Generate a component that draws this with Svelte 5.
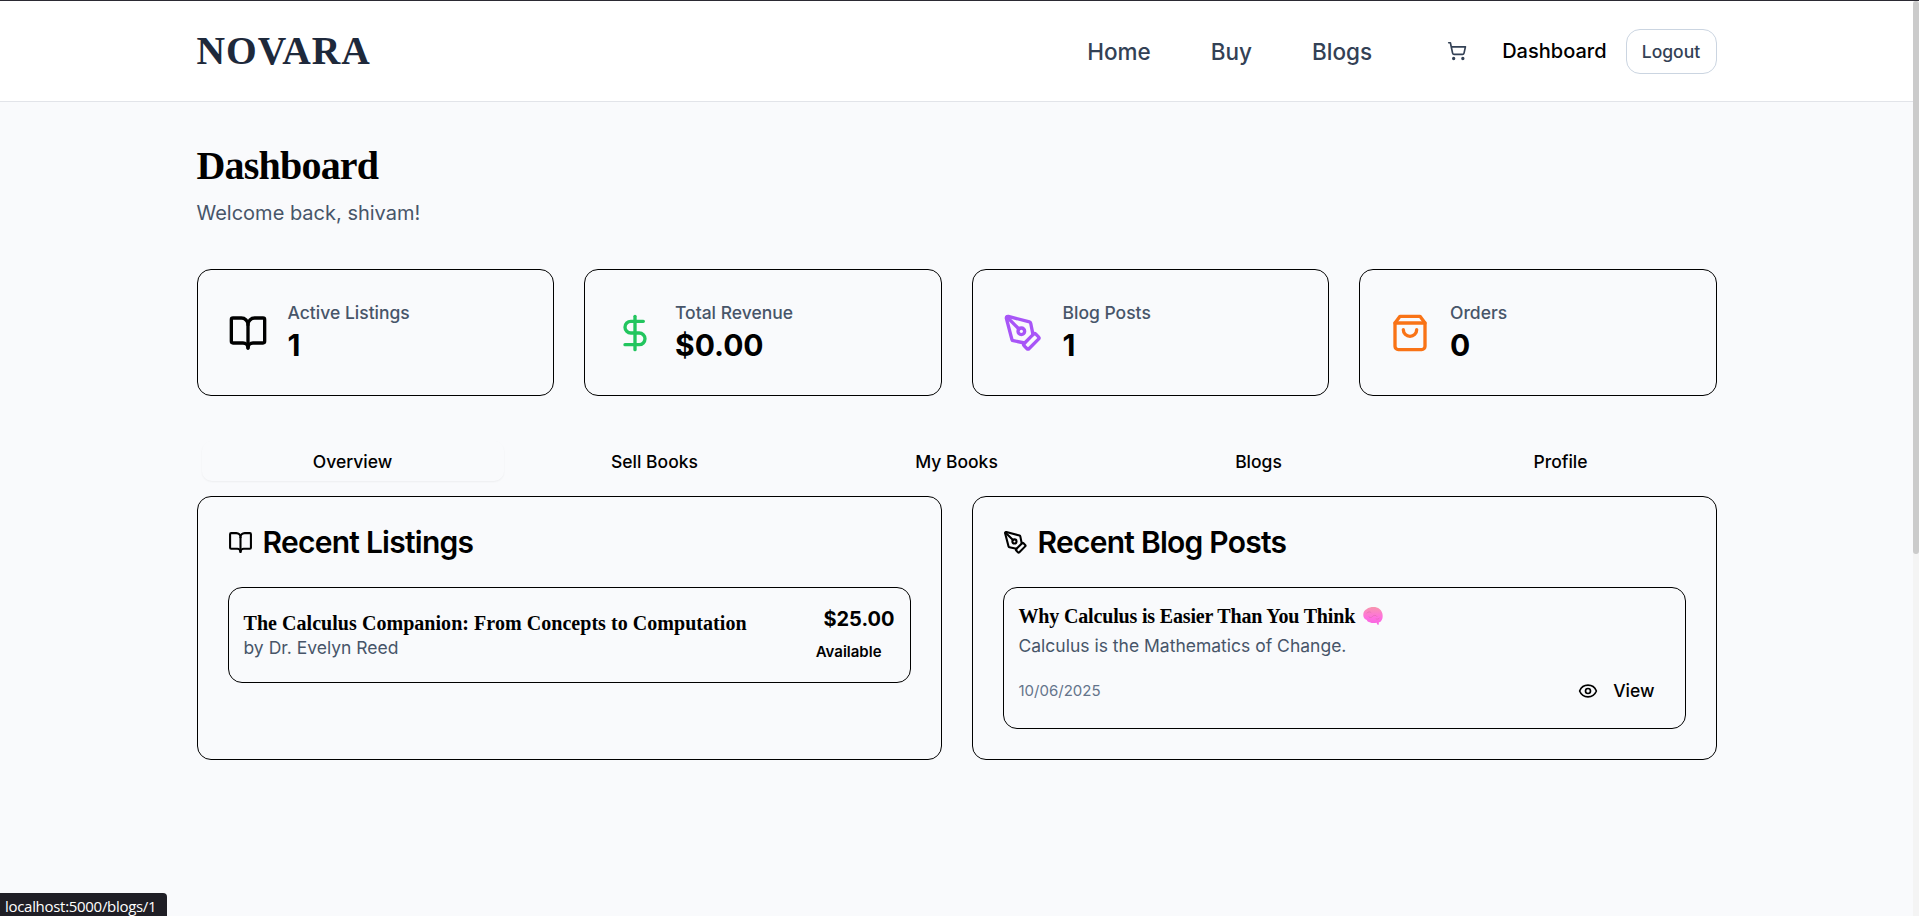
<script>
  const nav = ['Home', 'Buy', 'Blogs'];
  const stats = [
    { icon: 'book', color: '#000', label: 'Active Listings', value: '1' },
    { icon: 'dollar', color: '#22c55e', label: 'Total Revenue', value: '$0.00' },
    { icon: 'pen', color: '#a855f7', label: 'Blog Posts', value: '1' },
    { icon: 'bag', color: '#f97316', label: 'Orders', value: '0' }
  ];
  const tabs = ['Overview', 'Sell Books', 'My Books', 'Blogs', 'Profile'];
</script>

{#snippet icon(name)}
  <svg class="icon" viewBox="0 0 24 24" aria-hidden="true">
    {#if name === 'book'}
      <path d="M12 7v14" />
      <path d="M3 18a1 1 0 0 1-1-1V4a1 1 0 0 1 1-1h5a4 4 0 0 1 4 4 4 4 0 0 1 4-4h5a1 1 0 0 1 1 1v13a1 1 0 0 1-1 1h-6a3 3 0 0 0-3 3 3 3 0 0 0-3-3z" />
    {:else if name === 'dollar'}
      <path d="M12 2v20" />
      <path d="M17 5H9.500a3.500 3.500 0 0 0 0 7h5a3.500 3.500 0 0 1 0 7H6" />
    {:else if name === 'pen'}
      <path d="M15.707 21.293a1 1 0 0 1-1.414 0l-1.586-1.586a1 1 0 0 1 0-1.414l5.586-5.586a1 1 0 0 1 1.414 0l1.586 1.586a1 1 0 0 1 0 1.414z" />
      <path d="m18 13-1.375-6.874a1 1 0 0 0-.746-.776L3.235 2.028a1 1 0 0 0-1.207 1.207L5.350 15.879a1 1 0 0 0 .776.746L13 18" />
      <path d="m2.300 2.300 7.286 7.286" />
      <circle cx="11" cy="11" r="2" />
    {:else if name === 'bag'}
      <path d="M6 2 3 6v14a2 2 0 0 0 2 2h14a2 2 0 0 0 2-2V6l-3-4Z" />
      <path d="M3 6h18" />
      <path d="M16 10a4 4 0 0 1-8 0" />
    {:else if name === 'cart'}
      <circle cx="8" cy="21" r="1" />
      <circle cx="19" cy="21" r="1" />
      <path d="M2.050 2.050h2l2.660 12.420a2 2 0 0 0 2 1.580h9.780a2 2 0 0 0 1.950-1.570l1.650-7.430H5.120" />
    {:else if name === 'eye'}
      <path d="M2.062 12.348a1 1 0 0 1 0-.696 10.750 10.750 0 0 1 19.876 0 1 1 0 0 1 0 .696 10.750 10.750 0 0 1-19.876 0" />
      <circle cx="12" cy="12" r="3" />
    {/if}
  </svg>
{/snippet}

<div class="window">
  <div class="page">
    <header>
      <div class="container bar">
        <a class="brand" href="#home">NOVARA</a>
        <div class="right">
          <nav>
            {#each nav as item}
              <a href="#{item}">{item}</a>
            {/each}
          </nav>
          <button class="cart" aria-label="Cart">{@render icon('cart')}</button>
          <a class="dash" href="#dashboard">Dashboard</a>
          <button class="logout">Logout</button>
        </div>
      </div>
    </header>

    <main class="container">
      <h1>Dashboard</h1>
      <p class="welcome">Welcome back, shivam!</p>

      <section class="stats">
        {#each stats as s}
          <div class="stat">
            <span class="stat-icon" style="color: {s.color}">{@render icon(s.icon)}</span>
            <div>
              <p class="label">{s.label}</p>
              <p class="value">{s.value}</p>
            </div>
          </div>
        {/each}
      </section>

      <div class="tabs">
        {#each tabs as t, i}
          <button class="tab" class:active={i === 0}>{t}</button>
        {/each}
      </div>

      <section class="panels">
        <div class="panel">
          <h2><span class="head-icon">{@render icon('book')}</span>Recent Listings</h2>
          <div class="item listing">
            <div>
              <h3 class="book">The Calculus Companion: From Concepts to Computation</h3>
              <p class="muted author">by Dr. Evelyn Reed</p>
            </div>
            <div class="price-col">
              <p class="price">$25.00</p>
              <span class="badge">Available</span>
            </div>
          </div>
        </div>

        <div class="panel">
          <h2><span class="head-icon">{@render icon('pen')}</span>Recent Blog Posts</h2>
          <div class="item post">
            <h3>
              <span class="post-title">Why Calculus is Easier Than You Think</span>
              <svg class="brain" viewBox="0 0 20 18" aria-label="brain">
                <defs>
                  <linearGradient id="brain-fill" x1="0" y1="0" x2="0" y2="1">
                    <stop offset="0" stop-color="#f894ae" />
                    <stop offset="0.6" stop-color="#ff70e0" />
                    <stop offset="1" stop-color="#f765e0" />
                  </linearGradient>
                </defs>
                <path fill="url(#brain-fill)" d="M7 .5C10-.3 14-.1 16.500 2c2 1.500 3.200 4 3.200 7 0 3-1.200 5.800-4 6.600l.2 2c-1 .3-1.700 0-2-1.200l-.3-.7c-2.400.6-5 .5-6.800-.5-1.500-.1-2.600-.9-3-2.200C1.500 12.200.2 10.500.3 8 .2 5 1.700 3 3.500 2.200 4.500 1.300 5.800.8 7 .5Z" />
                <path fill="none" stroke="#e06cae" stroke-opacity=".8" stroke-width=".8" stroke-linecap="round" d="M4 6c1-1.500 3-1.500 4-.5M6 10c2 1.500 3 0 4-1s3-1 4 .5M13 12c1.500.5 3 0 3.500-1" />
              </svg>
            </h3>
            <p class="muted excerpt">Calculus is the Mathematics of Change.</p>
            <div class="post-foot">
              <span class="date">10/06/2025</span>
              <button class="view">{@render icon('eye')}View</button>
            </div>
          </div>
        </div>
      </section>
    </main>
  </div>

  <div class="scroll"><div class="thumb"></div></div>
  <div class="status">localhost:5000/blogs/1</div>
</div>

<style>
  :global(body) { background: #f9fafc; overflow: hidden; }
  * { box-sizing: border-box; }
  h1, h2, h3, p { margin: 0; }
  a { color: inherit; text-decoration: none; }
  button { font: inherit; color: inherit; background: none; border: 0; padding: 0; }

  .window {
    display: flex;
    position: relative;
    height: 916px;
    overflow: hidden;
    border-top: 1px solid #2b2a33;
    font-family: Inter, 'Liberation Sans', sans-serif;
    color: #000;
    background: #f9fafc;
  }
  .page { flex: 1; }
  .container { width: 1520px; margin: 0 auto; }
  .icon {
    display: block;
    width: 100%;
    height: 100%;
    fill: none;
    stroke: currentColor;
    stroke-width: 2;
    stroke-linecap: round;
    stroke-linejoin: round;
  }

  header { height: 101px; background: #fff; border-bottom: 1px solid #e2e4e9; }
  .bar { display: flex; align-items: center; justify-content: space-between; height: 100px; }
  .brand {
    font: bold 39.500px/50px 'Liberation Serif', serif;
    letter-spacing: 1px;
    color: #1e293b;
  }
  .right { display: flex; align-items: center; }
  nav { display: flex; gap: 60px; margin-right: 75px; font-size: 22.500px; font-weight: 500; color: #334155; }
  .cart { width: 20px; height: 20px; margin-right: 35px; color: #334155; }
  .dash { margin-right: 19px; font-size: 20px; font-weight: 500; }
  .logout {
    width: 91px;
    height: 45px;
    border: 1px solid #cbd5e1;
    border-radius: 14px;
    font-size: 17.500px;
    font-weight: 500;
    color: #334155;
  }

  main { padding-top: 41px; }
  h1 { font: bold 40px/45px 'Liberation Serif', serif; letter-spacing: -0.8px; }
  .welcome { margin-top: 10px; font-size: 20px; line-height: 30px; color: #475569; }

  .stats { display: grid; grid-template-columns: repeat(4, 1fr); gap: 30px; margin-top: 41px; }
  .stat {
    display: flex;
    align-items: center;
    gap: 20px;
    height: 127px;
    padding: 0 30px;
    border: 1px solid #000;
    border-radius: 14px;
  }
  .stat-icon { width: 40px; height: 40px; }
  .label { font-size: 17.500px; line-height: 25px; font-weight: 500; color: #475569; }
  .value { font-size: 30px; line-height: 40px; font-weight: 700; }

  .tabs { display: grid; grid-template-columns: repeat(5, 1fr); margin-top: 40px; padding: 5px; }
  .tab { height: 40px; border-radius: 10px; font-size: 17.500px; font-weight: 500; }
  .tab.active { box-shadow: 0 1px 2px rgba(0, 0, 0, 0.05); }

  .panels { display: grid; grid-template-columns: 1fr 1fr; gap: 30px; margin-top: 10px; }
  .panel { height: 264px; padding: 30px; border: 1px solid #000; border-radius: 14px; }
  h2 {
    display: flex;
    align-items: center;
    gap: 10px;
    height: 30px;
    font-size: 30px;
    font-weight: 600;
    letter-spacing: -0.75px;
    line-height: 30px;
  }
  .head-icon { width: 25px; height: 25px; }
  .item { margin-top: 30px; padding: 15px; border: 1px solid #000; border-radius: 14px; }
  .listing { display: flex; align-items: center; justify-content: space-between; height: 96px; }
  h3 { display: flex; align-items: center; font: bold 20px/25px 'Liberation Serif', serif; }
  .book { padding-top: 1px; letter-spacing: 0.045px; }
  .muted { font-size: 17.500px; line-height: 25px; color: #475569; }
  .author { margin-top: -1px; }
  .excerpt { margin-top: 4px; }
  .post-title { padding-top: 1px; letter-spacing: -0.165px; }
  .price-col { text-align: right; }
  .price { font-size: 20px; line-height: 30px; font-weight: 700; }
  .badge { display: block; padding: 8px 13px 4px 0; font-size: 15px; line-height: 20px; font-weight: 600; }
  .post { height: 142px; }
  .brain { width: 20px; height: 18px; margin-left: 8px; }
  .post-foot { display: flex; align-items: center; justify-content: space-between; height: 45px; margin-top: 10px; }
  .date { font-size: 15px; color: #64748b; }
  .view { display: flex; align-items: center; gap: 15px; padding-right: 15px; font-size: 17.500px; font-weight: 500; }
  .view :global(svg) { width: 20px; height: 20px; }

  .scroll { width: 6px; background: #f4f4f4; }
  .thumb { height: 553px; background: #cbcbcb; border-radius: 3px; }
  .status {
    position: absolute;
    left: 0;
    bottom: 0;
    width: 167px;
    height: 23px;
    padding-left: 5px;
    border-top-right-radius: 4px;
    background: #1f1e25;
    color: #fff;
    font: 15px/26px 'Open Sans', 'Noto Sans', sans-serif;
    letter-spacing: -0.3px;
  }
</style>
